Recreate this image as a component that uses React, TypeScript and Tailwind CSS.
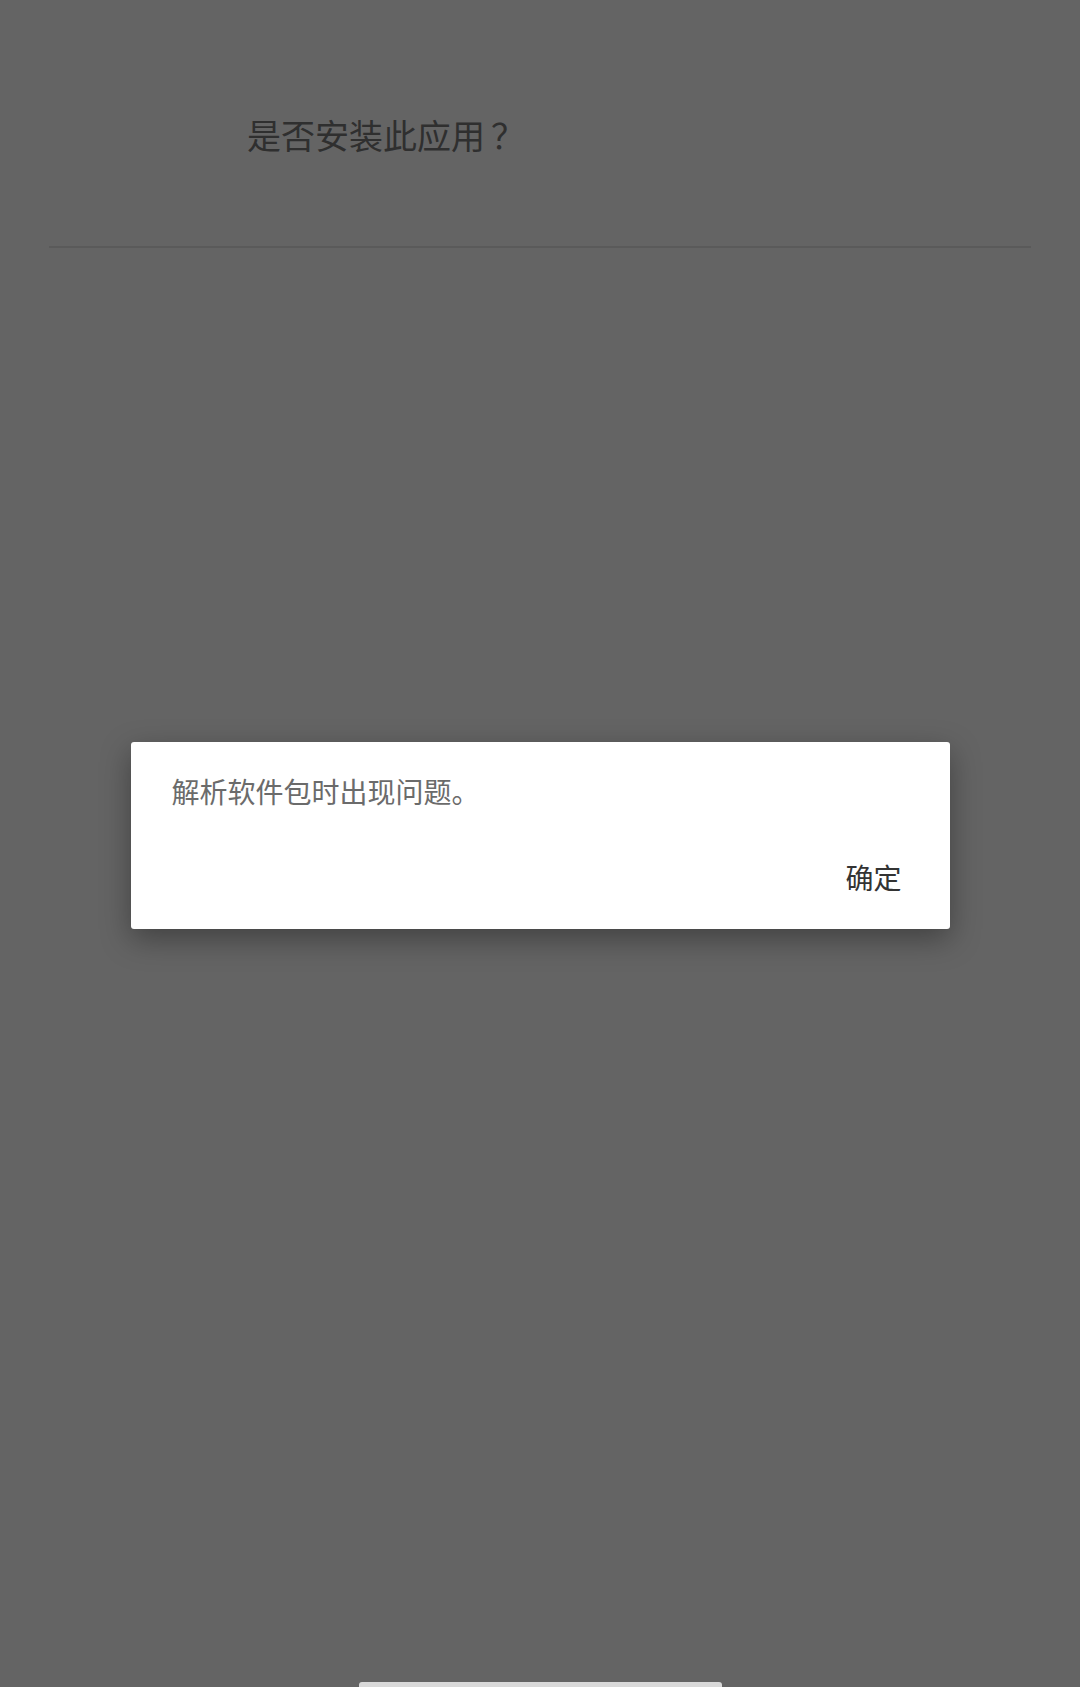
const cjk = { fontFamily: '"Noto Sans CJK SC", "Noto Sans", sans-serif' }

export default function App() {
  return (
    <div lang="zh-CN" className="flex h-[1687px] w-[1080px] flex-col bg-[#646464]" style={cjk}>
      {/* header */}
      <div className="pl-[247px] pt-[112px]">
        <h1 className="text-[34px] leading-[46px] font-normal text-[#2f2f2f]">
          是否安装此应用<span className="inline-block w-[1em] pl-[6px]">？</span>
        </h1>
      </div>
      <div className="mx-[49px] mt-[88px] h-[2px] bg-[#5a5a5a]" />

      {/* error dialog */}
      <div className="mx-auto mt-[494px] h-[187px] w-[819px] rounded-[3px] bg-white shadow-[0_10px_30px_rgba(0,0,0,0.35)]">
        <p className="pl-[41px] pt-[30px] text-[28px] leading-[38px] text-[#6b6b6b]">解析软件包时出现问题。</p>
        <div className="flex justify-end pr-[48px] pt-[48px]">
          <button className="text-[28px] leading-[38px] text-[#333333]">确定</button>
        </div>
      </div>

      {/* home indicator */}
      <div className="mx-auto mt-auto h-[5px] w-[363px] rounded-t-[3px] bg-[#d9d9d9]" />
    </div>
  )
}
